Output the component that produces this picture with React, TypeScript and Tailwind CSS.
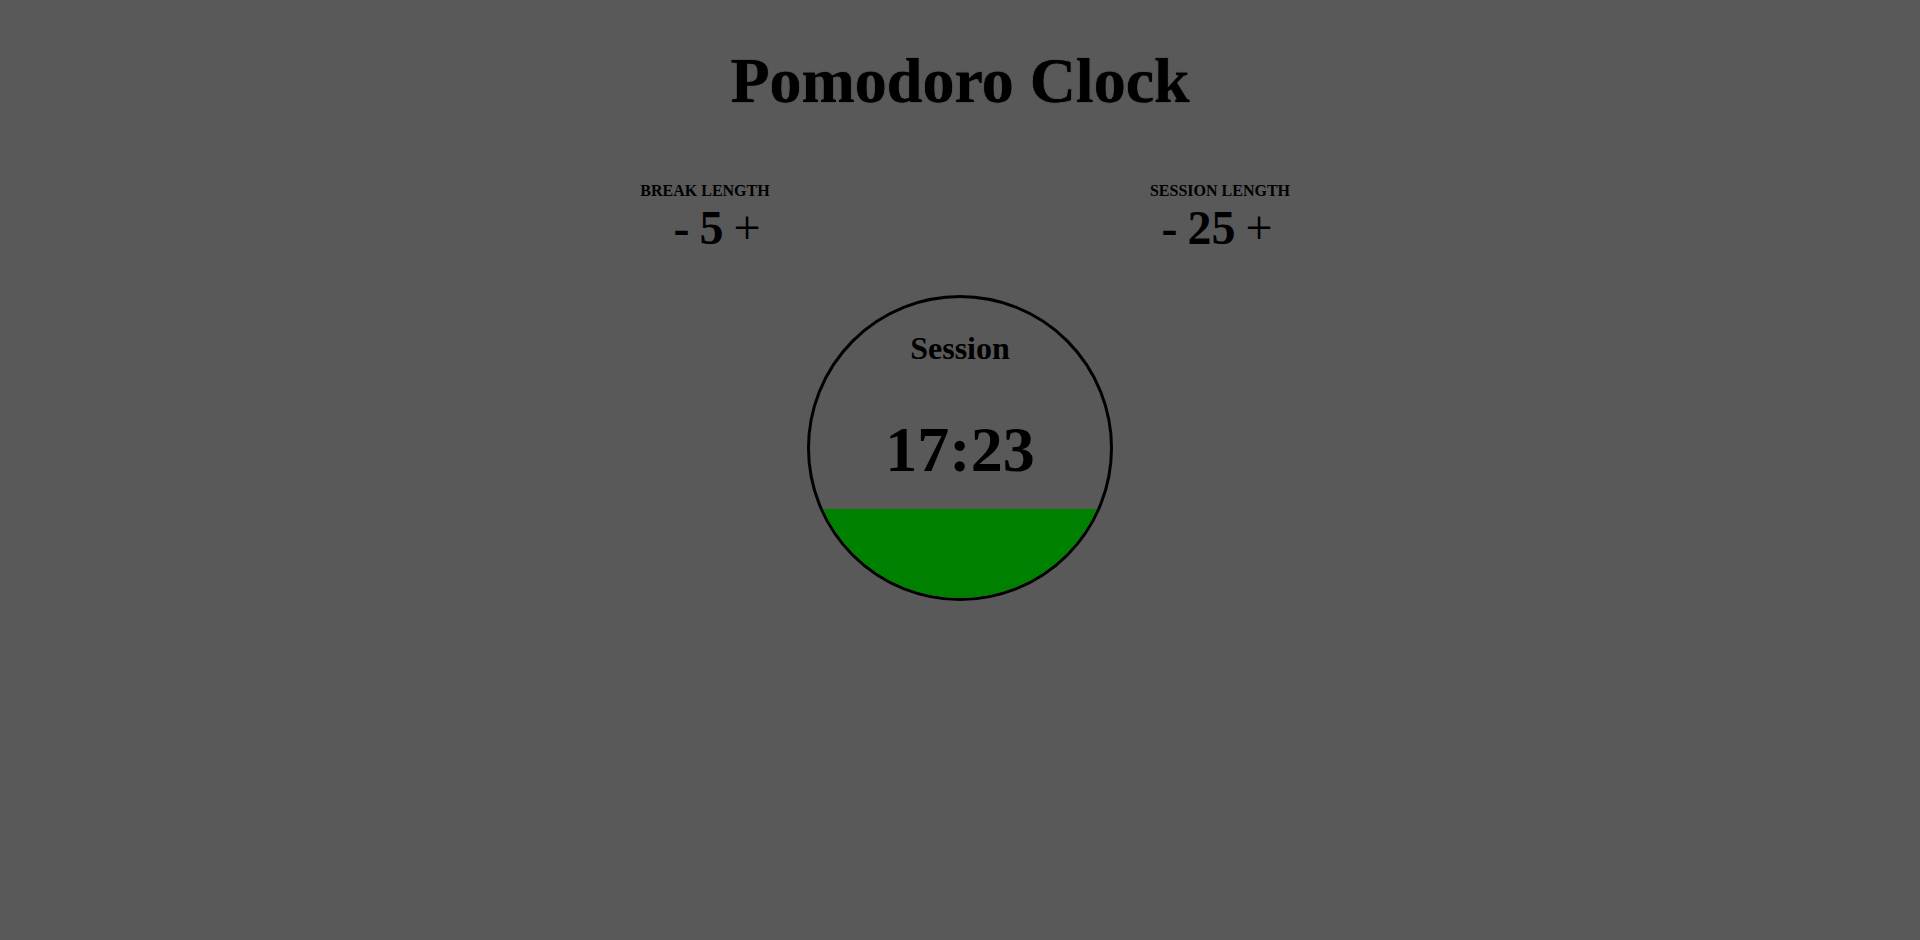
const serif = { fontFamily: '"Liberation Serif", "Times New Roman", serif' }

function Length({ label, value, shift }: { label: string; value: number; shift: string }) {
  return (
    <div className="w-[260px] flex flex-col items-center">
      <div className="text-[16px] font-bold uppercase leading-[normal]">{label}</div>
      <div className={'text-[48px] leading-[normal] flex items-baseline ' + shift}>
        <button className="font-bold cursor-pointer">-</button>
        <span className="font-bold mx-[10px]">{value}</span>
        <button className="cursor-pointer">+</button>
      </div>
    </div>
  )
}

export default function App() {
  const remaining = 17 * 60 + 23
  const total = 25 * 60
  const fill = ((total - remaining) / total) * 300
  return (
    <div className="min-h-[940px] bg-[#595959] text-black" style={serif}>
      <h1 className="text-[64px] font-bold text-center leading-[normal] pt-[44px] [text-shadow:0_0_1px_#000]">
        Pomodoro Clock
      </h1>
      <div className="flex justify-center gap-[255px] mt-[64px] pl-[5px]">
        <Length label="Break Length" value={5} shift="pl-[24px]" />
        <Length label="Session Length" value={25} shift="pr-[6px]" />
      </div>
      <div className="mt-[40px] mx-auto w-[306px] h-[306px] rounded-full border-[3px] border-black overflow-hidden relative">
        <div className="absolute bottom-0 left-0 right-0 bg-[#008000]" style={{ height: fill - 2 }} />
        <div className="relative flex flex-col items-center">
          <div className="text-[32px] font-bold leading-[normal] mt-[32px]">Session</div>
          <div className="text-[64px] font-bold leading-[normal] mt-[46px]">17:23</div>
        </div>
      </div>
    </div>
  )
}
